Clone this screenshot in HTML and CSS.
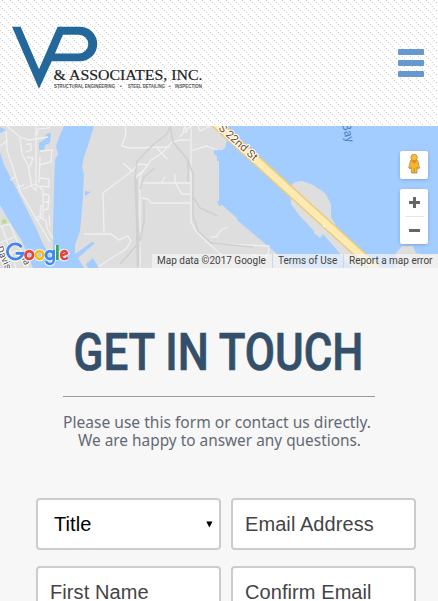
FILE: index.html
```html
<!DOCTYPE html>
<html lang="en">
<head>
<meta charset="utf-8">
<meta name="viewport" content="width=device-width, initial-scale=1">
<title>VP &amp; Associates, Inc.</title>
<link rel="stylesheet" href="styles.css">
</head>
<body>
<header class="header">
  <svg class="logo" viewBox="0 0 196 64" width="196" height="64" role="img" aria-label="VP &amp; Associates, Inc.">
    <path fill="#23679b" fill-rule="evenodd" d="M.5 .8H9L27 43.3 45.3 .8H67A17.2 17.2 0 0 1 67 35.3H39.5L27 62.8ZM50.5 8.7 42.7 27.5H66A9.4 9.4 0 0 0 66 8.7Z" transform="translate(-.5) scale(1.018 1)"/>
    <text class="logo-name" x="41.5" y="53.7" textLength="149" lengthAdjust="spacingAndGlyphs">&amp; ASSOCIATES, INC.</text>
    <g class="logo-tag">
      <text x="42" y="61.6" textLength="61" lengthAdjust="spacingAndGlyphs">STRUCTURAL ENGINEERING</text>
      <text x="108" y="61.6">•</text>
      <text x="116" y="61.6" textLength="37" lengthAdjust="spacingAndGlyphs">STEEL DETAILING</text>
      <text x="157" y="61.6">•</text>
      <text x="163" y="61.6" textLength="27" lengthAdjust="spacingAndGlyphs">INSPECTION</text>
    </g>
  </svg>
  <button class="menu" aria-label="Menu"><span></span><span></span><span></span></button>
</header>

<section class="map">
  <svg class="map-art" viewBox="0 0 438 142" width="438" height="142">
    <rect width="438" height="142" fill="#dedede"/>
    <g fill="#a3ccff">
      <path d="M0 26 4 39 14 58 25 80 36 102 43 118 53 134V101L54 60 55 34 58 28 56 20 60 9 64 0H94L90 13 84 31 82 41 84 48 83 71 80 105 75 119V128L92 116 95 117 78 132 84 142H33L22 115 11 98 0 79Z"/>
      <path d="M88 142 86 138 93 132 99 142ZM85 65 91 66 85 70ZM0 1 6 4 0 7ZM39 17 45 13 46 8 51 7 50 17 45 19 44 25 39 24Z"/>
      <path d="M216 0H438V142H293L269 121 237 94V92L222 79 219 80 217 75H219V35L217 35V30L214 28V24L222 24 225 22 227 15Z"/>
    </g>
    <g fill="#dedede">
      <path d="M290 60 295 56 302 55 313 59 325 67 331 78 331 91 336 100 342 109 382 142H352L336 123 323 108 320 112 314 107V105L299 89 291 78Z"/>
      <path d="M395 142V134L396 127 402 120H413L416 127 425 129 438 128V142Z"/>
    </g>
    <path d="M2 94 6 93 7 97 2 98Z" fill="#b8df86"/>
    <g fill="none" stroke="#f0f0f0" stroke-width="1.3">
      <path d="M7 0 20 11 29 14 48 11M36 0V64M50 0 49 2 38 3 37 9M6 5 7 24 21 67 50 116M8 14 0 20M20 12 22 28 28 39 32 61 37 65M26 18H31V24L26 26M27 31 33 32 30 41M40 25 52 24 51 36 39 39M40 31 39 57M40 52 49 53 49 61 38 60M23 63 36 58 43 64V91M10 54 15 51M17 61 24 59M43 68 49 69 48 83 43 84M44 76 48 76M41 79 40 91 46 95 47 102 53 113M35 93 42 88M43 91 36 95M49 89 50 101"/>
      <path d="M125 0 126 7 122 20 130 22 170 21M123 37 132 45 139 38 149 39M132 45 103 67 104 107M84 108H111L119 114 128 110 131 115 126 123 112 132 98 141"/>
      <path d="M191 0V96L196 105 207 116 225 132 237 142M190 14H180L172 16 162 27 151 34 140 50 140 142M191 57H141M145 43 136 51M157 22 167 33M161 57 165 51M175 48V56L182 68H190M142 72 148 73 151 77H190M191 25 206 20 217 24M179 11 191 0M187 7 185 0 183 6M198 0 200 5 210 0M211 111 216 111 221 104 228 101M218 118 269 120 268 130 252 129"/>
      <path d="M0 101 10 98 28 142M2 101 16 142M0 117 14 111M5 130 18 124"/>
    </g>
    <g fill="none" stroke="#d0d0d0" stroke-width="1.5">
      <path d="M170 0 167 8 154 18 137 35 135 53 136 80 139 108 138 142M170 0 173 16 188 34 193 48 193 90 198 105 211 117 253 121M155 42 144 51 140 63M193 71 200 82 218 90M188 34 188 56M144 74 144 96 140 115M137 119 120 138"/>
      <path d="M136 53 138 140" stroke-width="2.5"/>
    </g>
    <path d="M211-7 377 144" fill="none" stroke="#e9cc83" stroke-width="10"/>
    <path d="M211-7 377 144" fill="none" stroke="#ffebb1" stroke-width="7"/>
    <path d="m325 101-2-1M325 99l-1 2" stroke="#fff"/>
    <g class="map-label">
      <text class="road" transform="translate(218 3) rotate(42)" textLength="48" lengthAdjust="spacingAndGlyphs">S 22nd St</text>
      <text class="water" transform="translate(342 -2) rotate(77)">Bay</text>
      <text class="street" transform="translate(-4 122) rotate(66)">Davis</text>
      <text class="street" transform="translate(20 130) rotate(62)">na</text>
    </g>
  </svg>
  <svg class="google" viewBox="1 0 67 28" width="65" height="28" preserveAspectRatio="none" role="img" aria-label="Google">
    <g class="google-halo">
      <path d="M18.1 7.2A8 8 0 1 0 19.3 14H12"/>
      <circle cx="25.8" cy="15" r="4.1"/><circle cx="36.7" cy="15" r="4.1"/><circle cx="47.2" cy="15" r="4.1"/>
      <path d="M51.3 10V20Q51 24.2 47.2 24.2 44.5 24.2 43.3 21.5M54.7 5V20.5M57.6 16.3 65 13.2Q63.6 10.5 61 11 57.4 12 57.8 15.5C58.4 19.7 63.2 20.5 65.1 17.3"/>
    </g>
    <g fill="none" stroke-width="2.8">
      <path stroke="#4285f4" d="M18.1 7.2A8 7.6 0 1 0 19.3 13.4H12"/>
      <circle stroke="#ea4335" cx="26" cy="15" r="3.9"/>
      <circle stroke="#fbbc05" cx="36.7" cy="15" r="3.9"/>
      <circle stroke="#4285f4" cx="47.2" cy="15" r="3.9"/>
      <path stroke="#4285f4" stroke-width="2.4" d="M51.3 10V20Q51 24 47.2 24 44.5 24 43.3 21.3"/>
      <path stroke="#34a853" d="M55 5V20"/>
      <path stroke="#ea4335" stroke-width="2.4" d="M58.6 16 65 13.4Q64 10.7 62 11 58.4 12 58.8 15.5C59.4 19.7 63.7 20.2 65.6 17.3"/>
    </g>
  </svg>
  <div class="controls">
    <button class="pegman" aria-label="Street View">
      <svg viewBox="0 0 28 28" width="28" height="28">
        <path d="M10.2 11Q10 9 12 9H16Q18 9 18.2 11L19.5 17 18 18 17 16V22H11.4V16L10 18 8.7 17Z" fill="#f9b52c" stroke="#a98c57" stroke-width=".8"/>
        <path d="M14.2 17V22" stroke="#b78022" stroke-width=".7"/>
        <circle cx="14.1" cy="6.5" r="3.2" fill="#fdbd2c" stroke="#b5893c" stroke-width=".8"/>
        <path d="M11.5 9.7H16.8L14.2 13Z" fill="#ed8517"/>
      </svg>
    </button>
    <div class="zoom">
      <button class="zoom-in" aria-label="Zoom in"></button>
      <i></i>
      <button class="zoom-out" aria-label="Zoom out"></button>
    </div>
  </div>
  <div class="credits">
    <span class="data">Map data ©2017 Google</span><span class="terms">Terms of Use</span><span class="report">Report a map error</span>
  </div>
</section>

<main class="contact">
  <h1 class="title">
    <svg width="312" height="60" viewBox="0 0 312 60"><text x="10.5" y="50" textLength="290" lengthAdjust="spacingAndGlyphs">GET IN TOUCH</text></svg>
  </h1>
  <hr>
  <p class="intro">
    <svg width="312" height="44" viewBox="0 0 312 44">
      <text x="0" y="18" textLength="308" lengthAdjust="spacingAndGlyphs">Please use this form or contact us directly.</text>
      <text x="15" y="36" textLength="283" lengthAdjust="spacingAndGlyphs">We are happy to answer any questions.</text>
    </svg>
  </p>
  <form class="form">
    <div class="field select">Title<svg width="7" height="7" viewBox="0 0 7 7"><path d="M.3.5H6.5L3.4 6.5Z"/></svg></div>
    <div class="field">Email Address</div>
    <div class="field">First Name</div>
    <div class="field">Confirm Email</div>
  </form>
</main>
</body>
</html>
```

FILE: styles.css
```css
* { box-sizing: border-box; }

html, body {
  height: 100%;
  overflow: hidden;
}

body {
  margin: 0;
  background: #f7f7f7;
  font-family: "Liberation Sans", Arial, sans-serif;
}

button {
  border: 0;
  padding: 0;
  margin: 0;
  background: none;
}

.header {
  --dot: conic-gradient(from 0deg at 1px 1px, transparent 270deg, #cecece 0);
  height: 126px;
  padding: 26px 14px 0 12px;
  display: flex;
  justify-content: space-between;
  align-items: flex-start;
  background:
    var(--dot) 4px 2px / 8px 8px,
    var(--dot) 6px 4px / 8px 8px,
    var(--dot) 0 6px / 8px 8px,
    var(--dot) 2px 0 / 8px 8px,
    #fff;
}

.logo-name {
  font: 15.5px "Liberation Serif", serif;
  fill: #222;
  stroke: #222;
  stroke-width: .2px;
}

.logo-tag {
  font: bold 4.8px "Liberation Sans", sans-serif;
  fill: #555;
}

.menu {
  display: grid;
  gap: 5px;
  width: 26px;
  margin-top: 23px;
}

.menu span {
  height: 6px;
  border-radius: 1px;
  background: #6699cf;
}

.map {
  position: relative;
  height: 142px;
  overflow: hidden;
}

.map-art { display: block; }

.map-label {
  font: 11px Roboto, sans-serif;
  paint-order: stroke;
}

.road {
  fill: #735020;
  stroke: #fff;
  stroke-width: 2px;
}

.water {
  font-size: 12px;
  fill: #4d7fc4;
}

.street {
  font-size: 10px;
  fill: #555;
  stroke: #fff;
  stroke-width: 2px;
}

.google {
  position: absolute;
  left: 5px;
  bottom: 0;
}

.google-halo {
  fill: none;
  stroke: #fff;
  stroke-opacity: .75;
  stroke-width: 4.4;
}

.controls {
  position: absolute;
  top: 25px;
  right: 10px;
  display: grid;
  gap: 10px;
}

.pegman, .zoom {
  width: 28px;
  border-radius: 2px;
  background: #fff;
  box-shadow: 0 1px 4px -1px rgba(0, 0, 0, .3);
}

.pegman {
  height: 28px;
}

.pegman svg { display: block; }

.zoom {
  display: grid;
  grid-template-rows: 27px 1px 27px;
  justify-items: center;
}

.zoom i {
  width: 19px;
  background: #e6e6e6;
}

.zoom-in, .zoom-out {
  width: 28px;
  background: linear-gradient(#666, #666) center / 11px 3px no-repeat;
}

.zoom-in {
  background:
    linear-gradient(#666, #666) center / 11px 3px no-repeat,
    linear-gradient(#666, #666) center / 3px 11px no-repeat;
}

.credits {
  position: absolute;
  right: 0;
  bottom: 0;
  display: flex;
  height: 14px;
  font: 10px/14px Roboto, sans-serif;
  color: #444;
  white-space: nowrap;
}

.credits span {
  background: rgba(245, 245, 245, .7);
  padding-left: 5px;
}

.credits .data { width: 120px; }
.credits .terms, .credits .report { border-left: 1px solid rgba(190, 205, 225, .7); }
.credits .terms { width: 71px; }
.credits .report { width: 95px; }

.contact {
  padding: 52px 22px 0 36px;
}

.title, .intro {
  margin: 0 0 0 27px;
  height: 76px;
}

.title svg, .intro svg { display: block; }

.title text {
  font: 500 52px Roboto, sans-serif;
  fill: #344f6a;
  stroke: #344f6a;
  stroke-width: .7px;
}

.contact hr {
  width: 312px;
  margin: 0 0 0 27px;
  border: 0;
  border-top: 1px solid #9a9a9a;
}

.intro {
  height: 101px;
  padding-top: 13px;
}

.intro text {
  font: 16px "Noto Sans", sans-serif;
  fill: #646a74;
}

.form {
  display: grid;
  grid-template-columns: 185px 185px;
  gap: 16px 10px;
}

.field {
  height: 52px;
  padding: 0 12px;
  border: 2px solid #ccc;
  border-radius: 4px;
  background: #fff;
  color: #444;
  font-size: 20px;
  line-height: 48px;
  letter-spacing: .08px;
}

.select {
  display: flex;
  align-items: center;
  justify-content: space-between;
  padding: 0 6px 0 16px;
  color: #000;
}
```
